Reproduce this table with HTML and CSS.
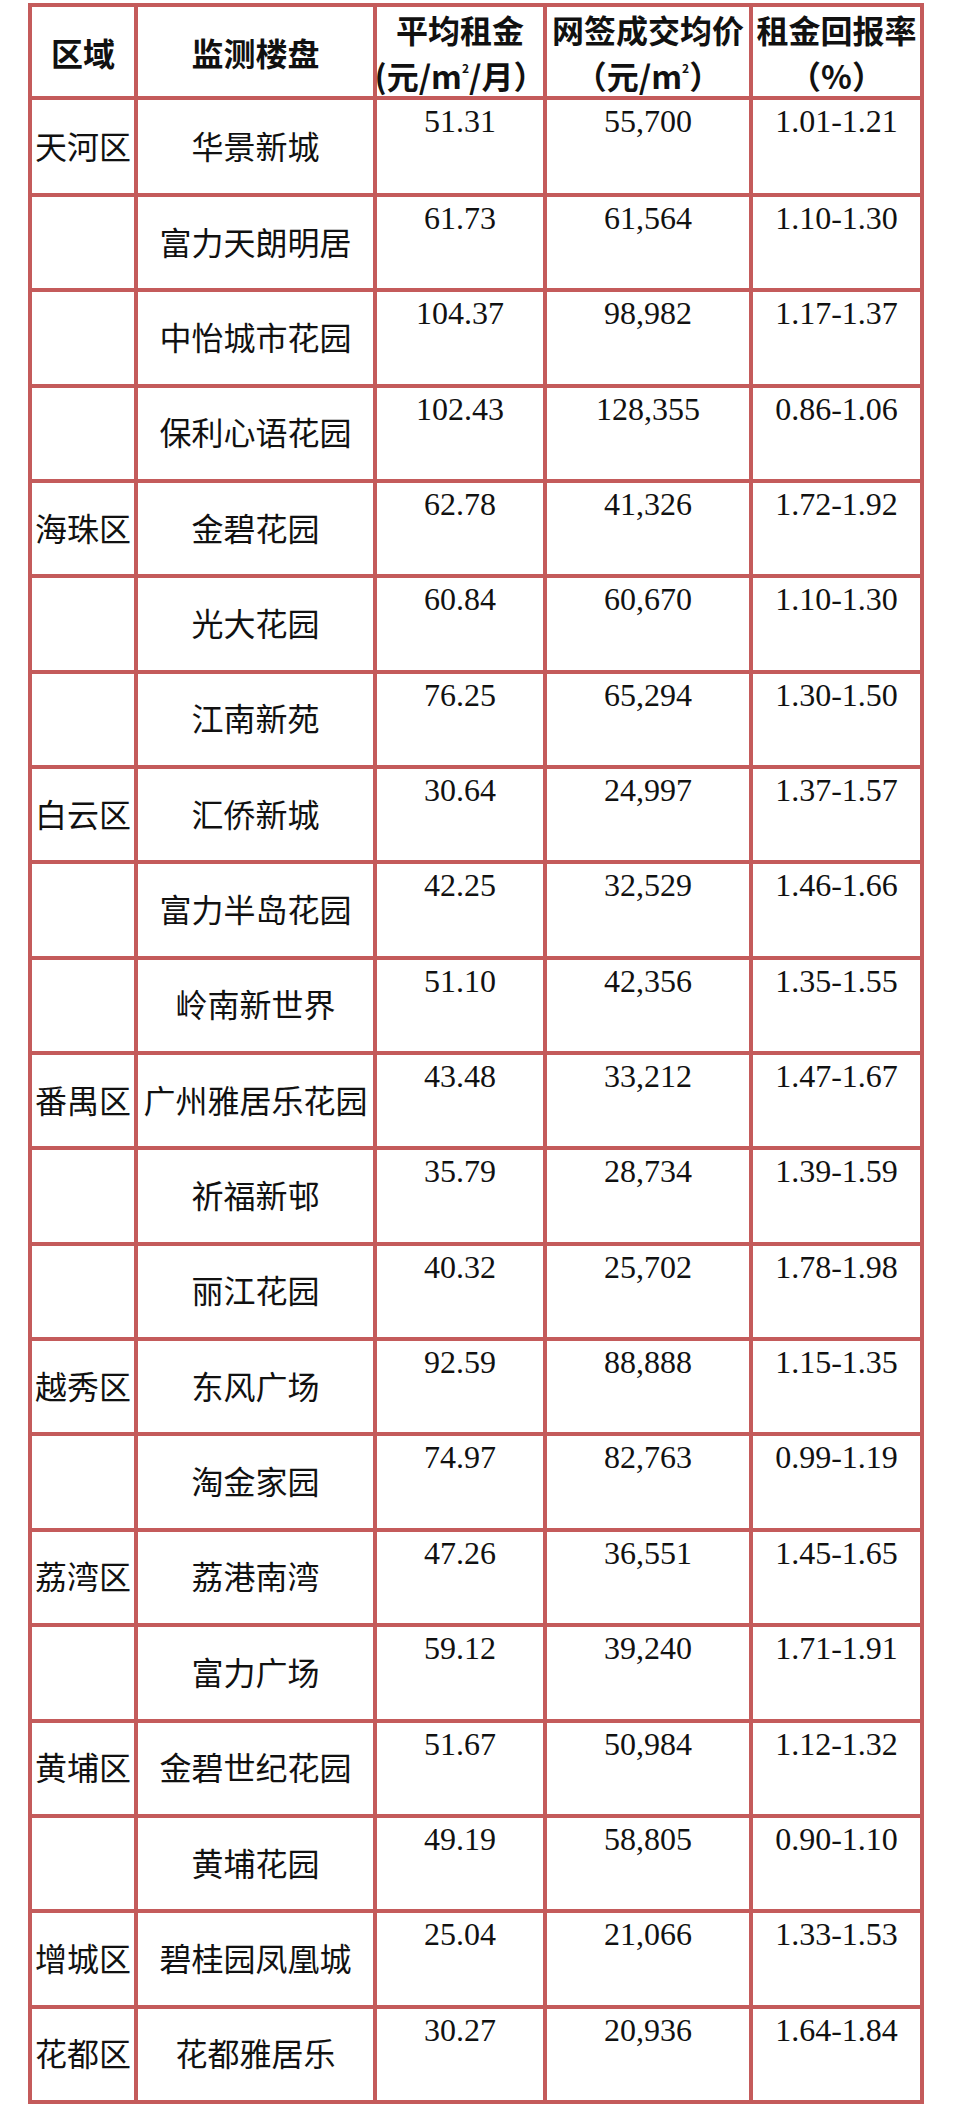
FILE: index.html
```html
<!DOCTYPE html>
<html lang="zh-CN">
<head>
<meta charset="utf-8">
<title>广州楼盘租金回报率</title>
<link rel="stylesheet" href="styles.css">
</head>
<body>
<div class="table">
  <div class="cell head"><span>区域</span></div>
  <div class="cell head"><span>监测楼盘</span></div>
  <div class="cell head"><span>平均租金<br>(元/m<sup class="sq">2</sup>/月）</span></div>
  <div class="cell head"><span>网签成交均价<br>（元/m<sup class="sq">2</sup>）</span></div>
  <div class="cell head"><span>租金回报率<br>（%）</span></div>

  <div class="cell zh">天河区</div><div class="cell zh">华景新城</div><div class="cell num">51.31</div><div class="cell num">55,700</div><div class="cell num">1.01-1.21</div>
  <div class="cell zh"></div><div class="cell zh">富力天朗明居</div><div class="cell num">61.73</div><div class="cell num">61,564</div><div class="cell num">1.10-1.30</div>
  <div class="cell zh"></div><div class="cell zh">中怡城市花园</div><div class="cell num">104.37</div><div class="cell num">98,982</div><div class="cell num">1.17-1.37</div>
  <div class="cell zh"></div><div class="cell zh">保利心语花园</div><div class="cell num">102.43</div><div class="cell num">128,355</div><div class="cell num">0.86-1.06</div>
  <div class="cell zh">海珠区</div><div class="cell zh">金碧花园</div><div class="cell num">62.78</div><div class="cell num">41,326</div><div class="cell num">1.72-1.92</div>
  <div class="cell zh"></div><div class="cell zh">光大花园</div><div class="cell num">60.84</div><div class="cell num">60,670</div><div class="cell num">1.10-1.30</div>
  <div class="cell zh"></div><div class="cell zh">江南新苑</div><div class="cell num">76.25</div><div class="cell num">65,294</div><div class="cell num">1.30-1.50</div>
  <div class="cell zh">白云区</div><div class="cell zh">汇侨新城</div><div class="cell num">30.64</div><div class="cell num">24,997</div><div class="cell num">1.37-1.57</div>
  <div class="cell zh"></div><div class="cell zh">富力半岛花园</div><div class="cell num">42.25</div><div class="cell num">32,529</div><div class="cell num">1.46-1.66</div>
  <div class="cell zh"></div><div class="cell zh">岭南新世界</div><div class="cell num">51.10</div><div class="cell num">42,356</div><div class="cell num">1.35-1.55</div>
  <div class="cell zh">番禺区</div><div class="cell zh">广州雅居乐花园</div><div class="cell num">43.48</div><div class="cell num">33,212</div><div class="cell num">1.47-1.67</div>
  <div class="cell zh"></div><div class="cell zh">祈福新邨</div><div class="cell num">35.79</div><div class="cell num">28,734</div><div class="cell num">1.39-1.59</div>
  <div class="cell zh"></div><div class="cell zh">丽江花园</div><div class="cell num">40.32</div><div class="cell num">25,702</div><div class="cell num">1.78-1.98</div>
  <div class="cell zh">越秀区</div><div class="cell zh">东风广场</div><div class="cell num">92.59</div><div class="cell num">88,888</div><div class="cell num">1.15-1.35</div>
  <div class="cell zh"></div><div class="cell zh">淘金家园</div><div class="cell num">74.97</div><div class="cell num">82,763</div><div class="cell num">0.99-1.19</div>
  <div class="cell zh">荔湾区</div><div class="cell zh">荔港南湾</div><div class="cell num">47.26</div><div class="cell num">36,551</div><div class="cell num">1.45-1.65</div>
  <div class="cell zh"></div><div class="cell zh">富力广场</div><div class="cell num">59.12</div><div class="cell num">39,240</div><div class="cell num">1.71-1.91</div>
  <div class="cell zh">黄埔区</div><div class="cell zh">金碧世纪花园</div><div class="cell num">51.67</div><div class="cell num">50,984</div><div class="cell num">1.12-1.32</div>
  <div class="cell zh"></div><div class="cell zh">黄埔花园</div><div class="cell num">49.19</div><div class="cell num">58,805</div><div class="cell num">0.90-1.10</div>
  <div class="cell zh">增城区</div><div class="cell zh">碧桂园凤凰城</div><div class="cell num">25.04</div><div class="cell num">21,066</div><div class="cell num">1.33-1.53</div>
  <div class="cell zh">花都区</div><div class="cell zh">花都雅居乐</div><div class="cell num">30.27</div><div class="cell num">20,936</div><div class="cell num">1.64-1.84</div>
</div>
</body>
</html>
```
FILE: styles.css
```css
html, body {
  margin: 0;
  padding: 0;
  background: #ffffff;
}

body {
  padding: 3px 0 0 28px;
}

.table {
  display: grid;
  grid-template-columns: 102px 235px 166px 202px 167px;
  grid-template-rows: 89px 93px repeat(20, 91.35px);
  gap: 4px;
  padding: 4px;
  width: max-content;
  background: #c45b5b;
}

.cell {
  background: #ffffff;
  color: #111111;
  overflow: visible;
  white-space: nowrap;
}

.head {
  display: flex;
  align-items: center;
  justify-content: center;
  text-align: center;
  font-family: "Noto Sans CJK SC", "Noto Sans", sans-serif;
  font-weight: 700;
  font-size: 32px;
  line-height: 46px;
}

.sq {
  font-size: 12px;
  line-height: 0;
  vertical-align: 16px;
  font-weight: 700;
}

.zh {
  display: flex;
  align-items: center;
  justify-content: center;
  font-family: "Noto Sans CJK SC", "Noto Sans", sans-serif;
  font-weight: 400;
  font-size: 32px;
  line-height: 40px;
  padding-bottom: 4px;
}

.num {
  text-align: center;
  font-family: "Liberation Serif", "Times New Roman", serif;
  font-size: 32px;
  line-height: normal;
  padding-top: 3px;
}
```
